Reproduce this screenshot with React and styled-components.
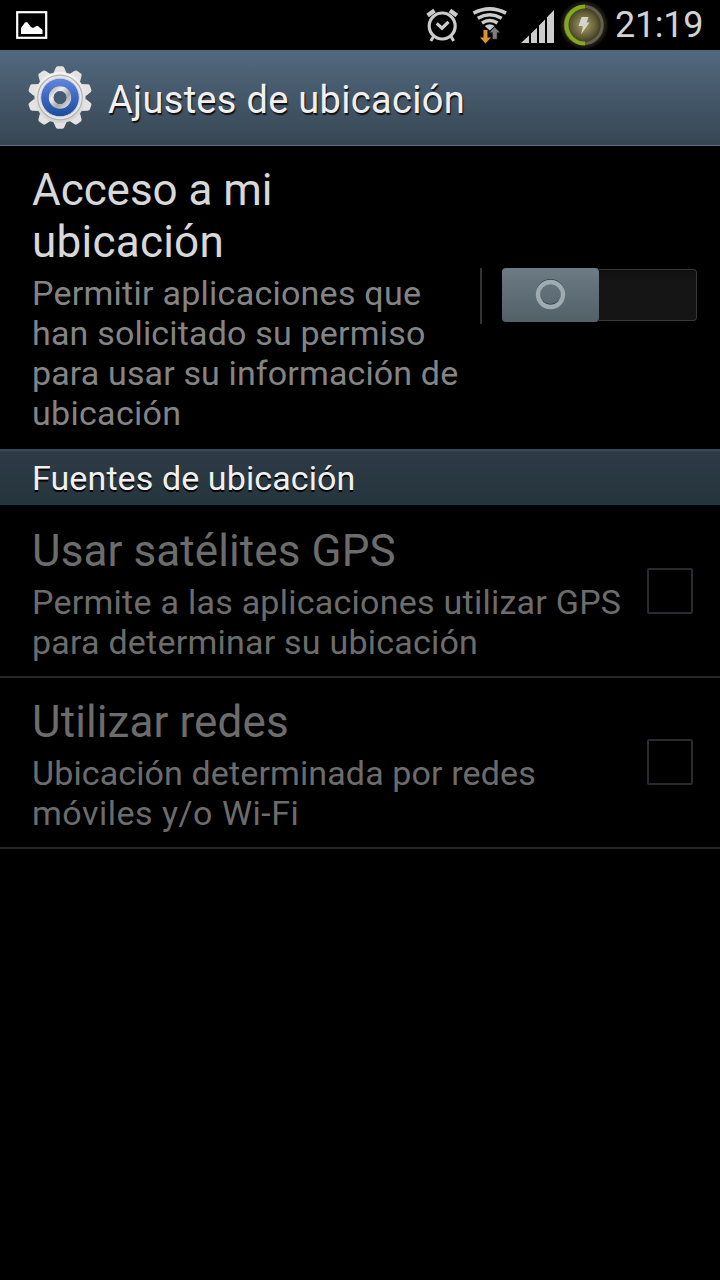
import React from "react";
import styled, { createGlobalStyle } from "styled-components";

const GlobalStyle = createGlobalStyle`
  * { box-sizing: border-box; }
  html, body { margin: 0; background: #000; }
  body { font-family: Roboto, "Noto Sans", sans-serif; }
`;

const Screen = styled.div`
  width: 720px;
  height: 1280px;
  background: #000;
  overflow: hidden;
  display: flex;
  flex-direction: column;
`;

const StatusBar = styled.div`
  height: 50px;
  flex: none;
  display: flex;
  justify-content: space-between;
  padding: 0 15px 0 16px;
`;

const StatusIcons = styled.div`
  display: flex;
`;

const StatusIcon = styled.svg`
  display: block;
  flex: none;
`;

const Clock = styled.span`
  width: 90px;
  margin-left: 7px;
  color: #d2d2d2;
  font-size: 36px;
  line-height: 50px;
  letter-spacing: -0.3px;
  white-space: nowrap;
`;

const ActionBar = styled.header`
  height: 96px;
  flex: none;
  display: flex;
  align-items: center;
  padding-left: 28px;
  gap: 16px;
  background: linear-gradient(#51697f, #374653);
  border-bottom: 1px solid #5c7183;
`;

const ActionTitle = styled.h1`
  margin: 5px 0 0;
  color: #f0f0f0;
  font-size: 38px;
  font-weight: 400;
  line-height: 42px;
  letter-spacing: 0.3px;
  text-shadow: 1px 2px 1px #111;
  white-space: nowrap;
`;

const AccessRow = styled.section`
  height: 303px;
  flex: none;
  display: flex;
  align-items: center;
  padding: 0 23px 5px 32px;
`;

const AccessText = styled.div`
  width: 448px;
  flex: none;
  padding-top: 7px;
`;

const Title = styled.h2`
  margin: 0;
  color: ${(p) => (p.$disabled ? "#6c6c6c" : "#d8d8d8")};
  font-size: 44px;
  font-weight: 400;
  line-height: 52px;
  letter-spacing: 0.1px;
  white-space: nowrap;
`;

const Summary = styled.p`
  margin: 5px 0 0;
  color: ${(p) => (p.$disabled ? "#6c6c6c" : "#848484")};
  font-size: 34px;
  line-height: 40px;
  white-space: nowrap;
`;

const Line = styled.span`
  display: block;
  letter-spacing: ${(p) => p.$spacing}px;
`;

const Divider = styled.div`
  width: 2px;
  height: 56px;
  margin: 2px 20px 0 0;
  background: #333;
`;

const Track = styled.div`
  width: 195px;
  height: 54px;
  margin-bottom: 1px;
  display: flex;
  align-items: center;
`;

const Thumb = styled.div`
  width: 97px;
  height: 54px;
  flex: none;
  display: flex;
  align-items: center;
  justify-content: center;
  border-radius: 4px;
  background: linear-gradient(#6c7b84, #526168);
`;

const TrackEnd = styled.div`
  flex: 1;
  height: 52px;
  border: 1px solid #383838;
  border-left: 0;
  border-radius: 0 4px 4px 0;
  background: linear-gradient(#0f0f0f, #151515 20%);
`;

const SectionHeader = styled.h2`
  margin: 0;
  height: 56px;
  flex: none;
  padding: 7px 32px 0;
  color: #f0f0f0;
  font-size: 34px;
  font-weight: 400;
  line-height: 40px;
  letter-spacing: 0.1px;
  text-shadow: 0 2px 0 #000;
  background: linear-gradient(#2f3b47, #24343c);
  border-top: 2px solid #3b4a5a;
`;

const OptionRow = styled.label`
  flex: none;
  height: ${(p) => p.$height}px;
  display: flex;
  align-items: flex-end;
  justify-content: space-between;
  padding: 0 27px 0 32px;
  border-bottom: 2px solid #262626;
`;

const OptionText = styled.div`
  padding-bottom: 14px;
`;

const Checkbox = styled.span`
  width: 46px;
  height: 46px;
  flex: none;
  margin-bottom: 62px;
  border: 2px solid #282b2d;
  border-radius: 2px;
`;

function PictureIcon() {
  return (
    <StatusIcon width="32" height="50" viewBox="0 0 32 50">
      <rect x="1.2" y="12.2" width="29" height="25.6" fill="none" stroke="#fff" strokeWidth="2.2" />
      <path d="M5 34V28L9 22.500L11 22L15 27L17 28L20.500 26L22 26L26.500 30V34Z" fill="#fff" />
    </StatusIcon>
  );
}

function AlarmIcon() {
  return (
    <StatusIcon width="46" height="50" viewBox="420 0 46 50" fill="none" stroke="#cbcbcb">
      <circle cx="442.200" cy="26" r="13" strokeWidth="3.200" />
      <path d="M436.700 23.300L442 28.200L448.500 21.800" strokeWidth="3.200" />
      <path d="M427.600 15.500L434.500 10.500M456.800 15.500L449.900 10.500" strokeWidth="4.400" />
      <path d="M433.500 36.500L430.800 41M451 36.500L453.700 41" strokeWidth="3" />
    </StatusIcon>
  );
}

function WifiIcon() {
  return (
    <StatusIcon width="46" height="50" viewBox="466 0 46 50">
      <g fill="none" stroke="#cbcbcb" strokeWidth="3.600">
        <path d="M473.500 13.200Q489.700 4.500 506 13.200" />
        <path d="M477.800 18.200Q489.700 11.400 501.700 18.200" />
        <path d="M482 23Q489.700 18 497.500 23" />
      </g>
      <path d="M484.800 26Q489.700 22.500 494.700 26L489.700 30.500Z" fill="#cbcbcb" />
      <path d="M483.500 30H487.500V37.500H491L485.500 43.500L480 37.500H483.500Z" fill="#d9932f" />
      <path d="M492.300 39.300V32.800H489L494.500 26.800L500.500 32.800H497.200V39.300Z" fill="#7d7d7d" stroke="#000" strokeWidth=".6" />
    </StatusIcon>
  );
}

function SignalIcon() {
  return (
    <StatusIcon width="46" height="50" viewBox="512 0 46 50" fill="#cdcdcd">
      <path d="M521 43L529 35.500V43ZM531 33.500L537 27.700V43H531ZM539 25.500L545 19.500V43H539ZM547 17.300L554 10V43H547Z" />
    </StatusIcon>
  );
}

function BatteryIcon() {
  return (
    <StatusIcon width="50" height="50" viewBox="558 0 50 50">
      <defs>
        <radialGradient id="batteryGlow">
          <stop offset="0" stopColor="#a89f68" />
          <stop offset=".5" stopColor="#605b35" />
          <stop offset=".75" stopColor="#302e1b" />
          <stop offset="1" stopColor="#000" />
        </radialGradient>
      </defs>
      <circle cx="584" cy="25" r="25" fill="url(#batteryGlow)" />
      <circle cx="583.700" cy="25" r="18.500" fill="none" stroke="#625f4e" strokeWidth="3" />
      <path d="M585 6.500A18.500 18.500 0 1 0 585 43.500" fill="none" stroke="#84a91c" strokeWidth="4" />
      <path d="M581.500 17H588.500L586.500 22.500H589.500L581 34.500L583 26H578.500Z" fill="#d5d5cb" />
    </StatusIcon>
  );
}

const teeth = Array.from({ length: 10 }, (_, i) => i * 36);

function SettingsGear() {
  return (
    <svg width="64" height="64" viewBox="-32 -31.5 64 64">
      <defs>
        <linearGradient id="gearMetal" x1="0" y1="0" x2="0" y2="1">
          <stop offset="0" stopColor="#f4f4f4" />
          <stop offset="1" stopColor="#d5d3d1" />
        </linearGradient>
        <linearGradient id="gearBlue" x1="0" y1="0" x2="0" y2="1">
          <stop offset="0" stopColor="#6487e2" />
          <stop offset=".5" stopColor="#3b66c3" />
          <stop offset="1" stopColor="#194d98" />
        </linearGradient>
        <linearGradient id="gearHub" x1="0" y1="0" x2="1" y2="1">
          <stop offset="0" stopColor="#b4b4b6" />
          <stop offset=".3" stopColor="#eee" />
          <stop offset=".65" stopColor="#aaa9aa" />
          <stop offset="1" stopColor="#ddd" />
        </linearGradient>
      </defs>
      <g transform="scale(1.030 1)">
        {teeth.map((angle) => (
          <path key={angle} d="M-6.500 -24L-4.300 -29.500Q-3.800 -31.300 -2.300 -31.300H2.300Q3.800 -31.300 4.300 -29.500L6.500 -24Z" fill="#e4e3e2" transform={`rotate(${angle})`} />
        ))}
      </g>
      <circle r="25.600" fill="url(#gearMetal)" />
      <circle r="22.300" fill="#e6e6e6" stroke="#b3b2b1" strokeWidth="1.200" />
      <circle r="19.300" fill="url(#gearBlue)" stroke="#d1d4dc" strokeWidth="1" />
      <circle r="8.800" fill="none" stroke="url(#gearHub)" strokeWidth="4.800" />
      <circle r="6.300" fill="#445a70" />
    </svg>
  );
}

function ThumbRing() {
  return (
    <svg width="32" height="32" viewBox="-15.5 -16 32 32" fill="none">
      <circle cy="-1.600" r="12.500" stroke="#323e47" strokeWidth="4" />
      <circle cy="-.5" r="12.500" stroke="#9faab1" strokeWidth="4.400" />
    </svg>
  );
}

function Option({ title, summary, height }) {
  return (
    <OptionRow $height={height}>
      <OptionText>
        <Title $disabled>{title}</Title>
        <Summary $disabled>
          {summary.map(([text, spacing]) => (
            <Line key={text} $spacing={spacing}>{text}</Line>
          ))}
        </Summary>
      </OptionText>
      <Checkbox role="checkbox" aria-checked="false" aria-disabled="true" />
    </OptionRow>
  );
}

export default function App() {
  return (
    <Screen>
      <GlobalStyle />
      <StatusBar>
        <PictureIcon />
        <StatusIcons>
          <AlarmIcon />
          <WifiIcon />
          <SignalIcon />
          <BatteryIcon />
          <Clock>21:19</Clock>
        </StatusIcons>
      </StatusBar>
      <ActionBar>
        <SettingsGear />
        <ActionTitle>Ajustes de ubicación</ActionTitle>
      </ActionBar>
      <AccessRow>
        <AccessText>
          <Title>
            <Line $spacing={-0.05}>Acceso a mi</Line>
            <Line $spacing={0.25}>ubicación</Line>
          </Title>
          <Summary>
            <Line $spacing={0.25}>Permitir aplicaciones que</Line>
            <Line $spacing={0.18}>han solicitado su permiso</Line>
            <Line $spacing={0.13}>para usar su información de</Line>
            <Line $spacing={0.3}>ubicación</Line>
          </Summary>
        </AccessText>
        <Divider />
        <Track role="switch" aria-checked="false">
          <Thumb><ThumbRing /></Thumb>
          <TrackEnd />
        </Track>
      </AccessRow>
      <SectionHeader>Fuentes de ubicación</SectionHeader>
      <Option
        height={173}
        title="Usar satélites GPS"
        summary={[["Permite a las aplicaciones utilizar GPS", 0.25], ["para determinar su ubicación", 0.22]]}
      />
      <Option
        height={171}
        title="Utilizar redes"
        summary={[["Ubicación determinada por redes", 0.12], ["móviles y/o Wi-Fi", 0.5]]}
      />
    </Screen>
  );
}
